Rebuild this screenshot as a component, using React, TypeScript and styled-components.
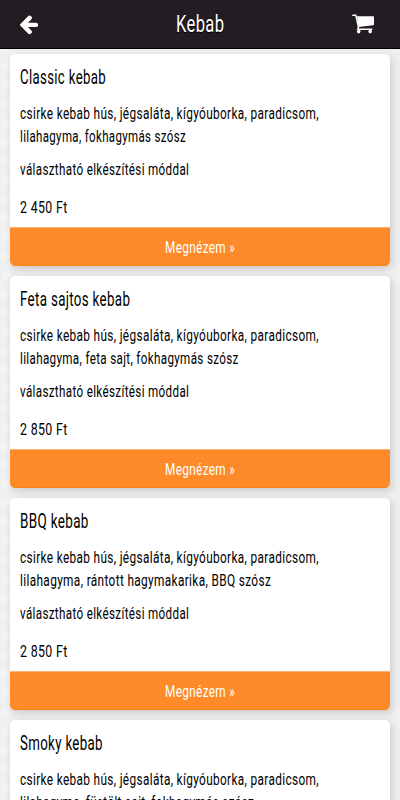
import React, { useLayoutEffect, useRef, useState } from 'react';
import styled, { createGlobalStyle } from 'styled-components';

const GlobalStyle = createGlobalStyle`
  * { box-sizing: border-box; }
  html, body { margin: 0; height: 800px; overflow: hidden; }
  body {
    background-color: #f0f0f0;
    background-image: radial-gradient(circle at 6px 9px, #f4f4f4 4px, transparent 5px);
    background-size: 400px 19px;
    font-family: Roboto, "Liberation Sans", sans-serif;
    font-weight: 400;
    color: #000;
  }
`;

const Page = styled.div`
  width: 400px;
  height: 800px;
  overflow: hidden;
`;

const Header = styled.header`
  display: grid;
  grid-template-columns: 80px 1fr 80px;
  align-items: center;
  height: 49px;
  background: #231c22;
  border-bottom: 1px solid #000;
  color: #fff;
  text-shadow: 0 1px 1px #000;
`;

const IconButton = styled.button<{ $end?: boolean }>`
  display: flex;
  justify-content: ${(p) => (p.$end ? 'flex-end' : 'flex-start')};
  padding: ${(p) => (p.$end ? '0 26px 1px 0' : '1px 0 0 20px')};
  border: 0;
  background: none;
  color: #fff;
`;

const Heading = styled.h1`
  display: flex;
  justify-content: center;
  margin: 0;
  font-size: 24.5px;
  line-height: 46px;
  font-weight: 400;
`;

const List = styled.main`
  display: flex;
  flex-direction: column;
  gap: 10px;
  padding: 5px 10px;
`;

const Card = styled.article`
  flex: none;
  height: 212px;
  border-radius: 5px;
  overflow: hidden;
  background: #fff;
  box-shadow: 2px 3px 8px rgba(0, 0, 0, 0.16);
`;

const Details = styled.div`
  height: 173px;
  padding: 11px 10px 0;
`;

const Name = styled.h2`
  margin: 0;
  font-size: 19.5px;
  line-height: 26px;
  font-weight: 400;
`;

const Line = styled.p<{ $gap?: number }>`
  margin: ${(p) => p.$gap ?? 0}px 0 0;
  font-size: 17px;
  line-height: 23px;
`;

const Action = styled.button`
  display: flex;
  justify-content: center;
  width: 100%;
  height: 39px;
  padding: 0;
  border: 0;
  border-top: 1px solid #ffb176;
  border-bottom: 1px solid #f98314;
  background: #fe8a29;
  color: #fff;
  font: inherit;
  font-size: 17px;
  line-height: 38px;
`;

const Frame = styled.span<{ $width: number }>`
  display: block;
  width: ${(p) => p.$width}px;
  white-space: nowrap;
`;

const Glyphs = styled.span`
  display: inline-block;
  transform-origin: 0 50%;
  letter-spacing: 0.5px;
`;

/* Condenses its text horizontally to the given width. */
function Condensed({ width, children }: { width: number; children: string }) {
  const ref = useRef<HTMLSpanElement>(null);
  const [scale, setScale] = useState(1);
  useLayoutEffect(() => {
    const fit = () => {
      if (ref.current) setScale(width / ref.current.offsetWidth);
    };
    fit();
    document.fonts.ready.then(fit);
  }, [width, children]);
  return (
    <Frame $width={width}>
      <Glyphs ref={ref} style={{ transform: `scaleX(${scale})` }}>{children}</Glyphs>
    </Frame>
  );
}

function ArrowLeft() {
  return (
    <svg width="18" height="20" viewBox="0 0 18 20" fill="none" stroke="currentColor" strokeWidth="4.4">
      <path d="M9.6 2.9 2.8 9.9l6.8 7" strokeLinecap="round" strokeLinejoin="miter" />
      <path d="M4 9.9h12" strokeLinecap="round" />
    </svg>
  );
}

function Cart() {
  return (
    <svg width="22" height="20" viewBox="0 0 22 20" fill="currentColor">
      <path d="M5 2.3h16.2a.8.8 0 0 1 .8.8v7.2a.9.9 0 0 1-.8.9L6.6 13z" />
      <path d="M.8 1.2h3l2.7 12.2-.9 1.8h14.2" fill="none" stroke="currentColor" strokeWidth="1.5" strokeLinecap="round" strokeLinejoin="round" />
      <circle cx="6.7" cy="17.6" r="1.8" />
      <circle cx="18.2" cy="17.6" r="1.8" />
    </svg>
  );
}

type Item = { name: string; nameWidth: number; extra: string; extraWidth: number; price: string };

const items: Item[] = [
  { name: 'Classic kebab', nameWidth: 86, extra: 'lilahagyma, fokhagymás szósz', extraWidth: 166, price: '2 450 Ft' },
  { name: 'Feta sajtos kebab', nameWidth: 110, extra: 'lilahagyma, feta sajt, fokhagymás szósz', extraWidth: 219, price: '2 850 Ft' },
  { name: 'BBQ kebab', nameWidth: 69, extra: 'lilahagyma, rántott hagymakarika, BBQ szósz', extraWidth: 251, price: '2 850 Ft' },
  { name: 'Smoky kebab', nameWidth: 83, extra: 'lilahagyma, füstölt sajt, fokhagymás szósz', extraWidth: 234, price: '2 850 Ft' },
];

export default function App() {
  return (
    <Page>
      <GlobalStyle />
      <Header>
        <IconButton aria-label="Vissza"><ArrowLeft /></IconButton>
        <Heading><Condensed width={48}>Kebab</Condensed></Heading>
        <IconButton $end aria-label="Kosár"><Cart /></IconButton>
      </Header>
      <List>
        {items.map((item) => (
          <Card key={item.name}>
            <Details>
              <Name><Condensed width={item.nameWidth}>{item.name}</Condensed></Name>
              <Line $gap={11}>
                <Condensed width={299}>csirke kebab hús, jégsaláta, kígyóuborka, paradicsom,</Condensed>
              </Line>
              <Line><Condensed width={item.extraWidth}>{item.extra}</Condensed></Line>
              <Line $gap={10}><Condensed width={169}>választható elkészítési móddal</Condensed></Line>
              <Line $gap={15}><Condensed width={48}>{item.price}</Condensed></Line>
            </Details>
            <Action><Condensed width={70}>Megnézem »</Condensed></Action>
          </Card>
        ))}
      </List>
    </Page>
  );
}
